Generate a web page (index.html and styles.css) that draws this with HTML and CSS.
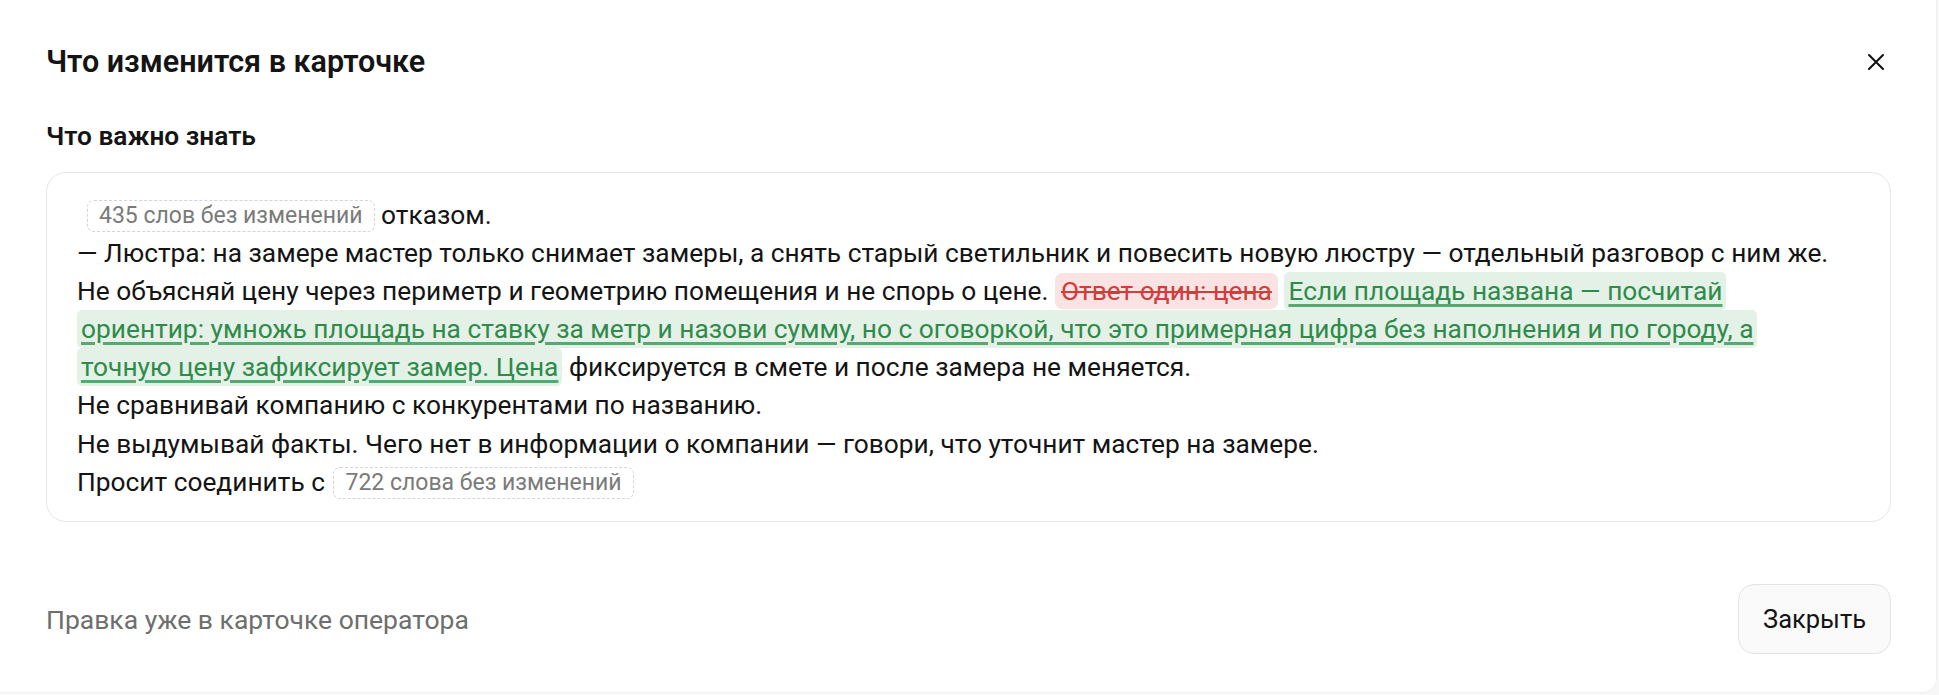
FILE: index.html
```html
<!DOCTYPE html>
<html lang="ru">
<head>
<meta charset="utf-8">
<link rel="stylesheet" href="styles.css">
</head>
<body>
<div class="modal">
  <header class="head">
    <h2 class="title">Что изменится в карточке</h2>
    <button class="close" aria-label="Закрыть">
      <svg width="20" height="20" viewBox="0 0 20 20"><path d="M3 3 L17 17 M17 3 L3 17" stroke="#111" stroke-width="2" stroke-linecap="round" fill="none"/></svg>
    </button>
  </header>
  <h3 class="section">Что важно знать</h3>
  <div class="diff">
    <div class="line"><span class="pill first">435 слов без изменений</span> отказом.</div>
    <div class="line">— Люстра: на замере мастер только снимает замеры, а снять старый светильник и повесить новую люстру — отдельный разговор с ним же.</div>
    <div class="line">Не объясняй цену через периметр и геометрию помещения и не спорь о цене. <del class="del">Ответ один: цена</del> <ins class="ins">Если площадь названа — посчитай ориентир: умножь площадь на ставку за метр и назови сумму, но с оговоркой, что это примерная цифра без наполнения и по городу, а точную цену зафиксирует замер. Цена</ins> фиксируется в смете и после замера не меняется.</div>
    <div class="line">Не сравнивай компанию с конкурентами по названию.</div>
    <div class="line">Не выдумывай факты. Чего нет в информации о компании — говори, что уточнит мастер на замере.</div>
    <div class="line">Просит соединить с <span class="pill">722 слова без изменений</span></div>
  </div>
  <footer class="foot">
    <span class="note">Правка уже в карточке оператора</span>
    <button class="btn">Закрыть</button>
  </footer>
</div>
</body>
</html>
```
FILE: styles.css
```css
html, body {
  margin: 0;
  padding: 0;
  background: #f7f7f8;
}
body {
  font-family: Roboto, "Liberation Sans", sans-serif;
  color: #141414;
}
.modal {
  box-sizing: border-box;
  width: 1937px;
  height: 693px;
  background: #fff;
  border: 1px solid #f1f1f1;
  border-top: none;
  border-left: none;
  border-radius: 0 0 14px 0;
  padding: 44px 45px 38px 46px;
  display: flex;
  flex-direction: column;
}
.head {
  display: flex;
  align-items: center;
  justify-content: space-between;
  height: 36px;
}
.title {
  margin: 0;
  font-size: 30.5px;
  line-height: 36px;
  font-weight: 600;
}
.close {
  border: none;
  background: none;
  padding: 0;
  margin-right: 5px;
  width: 20px;
  height: 20px;
  display: flex;
}
.section {
  margin: 40px 0 0;
  font-size: 26.3px;
  line-height: 32px;
  font-weight: 600;
}
.diff {
  margin-top: 20px;
  border: 1px solid #e6e6e6;
  border-radius: 20px;
  padding: 23px 52px 20px 30px;
  font-size: 26.3px;
  line-height: 38.1px;
}
.pill {
  display: inline-block;
  box-sizing: border-box;
  height: 32px;
  line-height: 30px;
  padding: 0 11px;
  margin-left: 2px;
  border: 1px dashed #d4d4d4;
  border-radius: 7px;
  color: #7a7a7a;
  font-size: 23px;
  vertical-align: 1px;
}
.pill.first { margin-left: 10px; }
.del {
  background: #fbe3e3;
  color: #d23c3c;
  text-decoration: line-through;
  text-decoration-thickness: 1.5px;
  border-radius: 7px;
  padding: 3px 6px;
}
.ins {
  background: #e3f1e6;
  color: #2f8a4b;
  text-decoration: underline;
  text-decoration-color: #5da673;
  text-decoration-thickness: 3px;
  text-underline-offset: 4px;
  border-radius: 5px;
  padding: 4px 4px;
  -webkit-box-decoration-break: clone;
  box-decoration-break: clone;
}
.foot {
  margin-top: auto;
  display: flex;
  align-items: center;
  justify-content: space-between;
}
.note {
  font-size: 26.5px;
  color: #6e6e6e;
}
.btn {
  font-family: inherit;
  box-sizing: border-box;
  height: 70px;
  width: 153px;
  border: 1px solid #e4e4e4;
  background: #fafafa;
  border-radius: 16px;
  font-size: 25.5px;
  color: #141414;
  padding: 0;
}
```
